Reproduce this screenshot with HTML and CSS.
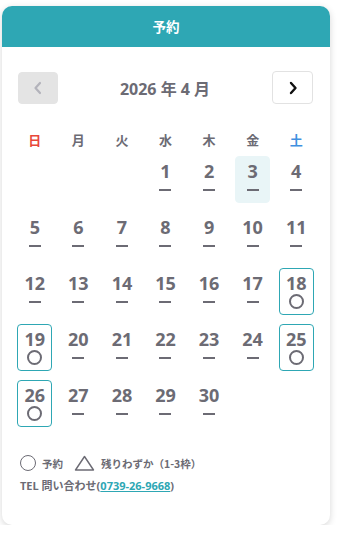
FILE: index.html
```html
<!DOCTYPE html>
<html lang="ja">
<head>
  <meta charset="UTF-8">
  <meta name="viewport" content="width=device-width, initial-scale=1.0">
  <title>予約</title>
  <link rel="stylesheet" href="styles.css">
</head>
<body>
  <div class="page">
    <div class="card">
      <div class="card-header">予約</div>

      <!-- 月の切り替え -->
      <div class="month-nav">
        <button class="nav-btn prev" disabled>
          <svg width="12" height="14" viewBox="0 0 12 14"><path d="M8 2 L3.5 7 L8 12" fill="none" stroke="#b3b3bb" stroke-width="2.2" stroke-linecap="round" stroke-linejoin="round"/></svg>
        </button>
        <div class="month-title">2026 年 4 月</div>
        <button class="nav-btn next">
          <svg width="12" height="14" viewBox="0 0 12 14"><path d="M4 2 L8.5 7 L4 12" fill="none" stroke="#111" stroke-width="2.4" stroke-linecap="round" stroke-linejoin="round"/></svg>
        </button>
      </div>

      <div class="weekdays">
        <div class="sun">日</div>
        <div>月</div>
        <div>火</div>
        <div>水</div>
        <div>木</div>
        <div>金</div>
        <div class="sat">土</div>
      </div>

      <div class="days" id="days"></div>

      <div class="legend">
        <span class="circle"></span><span class="legend-text">予約</span>
        <svg class="triangle" width="21" height="16" viewBox="0 0 21 16"><path d="M10.5 1.5 L19.5 15 L1.5 15 Z" fill="none" stroke="#6c6b74" stroke-width="1.4" stroke-linejoin="round"/></svg>
        <span class="legend-text">残りわずか（1-3枠）</span>
      </div>
      <div class="tel">TEL 問い合わせ(<a href="#">0739-26-9668</a>)</div>
    </div>
  </div>

  <script>
    var open = [18, 19, 25, 26];
    var today = 3;
    var days = document.getElementById("days");

    // 2026年4月1日は水曜日
    for (var i = 0; i < 3; i++) {
      var blank = document.createElement("div");
      days.appendChild(blank);
    }

    for (var d = 1; d <= 30; d++) {
      var cell = document.createElement("div");
      cell.className = "day";
      if (d == today) cell.className += " today";
      var isOpen = open.indexOf(d) >= 0;
      if (isOpen) cell.className += " open";
      cell.innerHTML = '<div class="num">' + d + '</div>' +
        '<div class="mark">' + (isOpen ? '<span class="circle small"></span>' : '<span class="dash"></span>') + '</div>';
      var wrap = document.createElement("div");
      wrap.className = "day-wrap";
      wrap.appendChild(cell);
      days.appendChild(wrap);
    }
  </script>
</body>
</html>
```

FILE: styles.css
```css
body {
  margin: 0;
  background-color: #fff;
  font-family: "Open Sans", "Noto Sans CJK JP", sans-serif;
  color: #6c6b74;
}
.page {
  padding: 6px 8px 0 2px;
}
.card {
  width: 328px;
  height: 519px;
  background-color: #fff;
  border-radius: 10px;
  box-shadow: 0 2px 7px rgba(0, 0, 0, 0.16);
  overflow: hidden;
  position: relative;
}
.card-header {
  height: 41px;
  line-height: 41px;
  background-color: #2ea7b4;
  color: #fff;
  text-align: center;
  font-family: "Noto Sans CJK JP", sans-serif;
  font-size: 13.5px;
  font-weight: bold;
}
.month-nav {
  display: flex;
  align-items: center;
  justify-content: space-between;
  padding: 24px 17px 0 16px;
}
.nav-btn {
  width: 41px;
  height: 33px;
  border-radius: 4px;
  border: 1px solid #e2e2e2;
  background-color: #fff;
  display: flex;
  align-items: center;
  justify-content: center;
  padding: 0;
  cursor: pointer;
}
.nav-btn.prev {
  width: 40px;
  height: 32px;
  margin-top: 1px;
  background-color: #e4e4e4;
  border-color: #e4e4e4;
  cursor: default;
}
.month-title {
  font-size: 16px;
  font-weight: bold;
  color: #6c6b74;
}
.weekdays {
  display: grid;
  grid-template-columns: repeat(7, 1fr);
  padding: 0 12px 0 11px;
  margin-top: 26px;
  font-family: "Noto Sans CJK JP", sans-serif;
  font-size: 13px;
  font-weight: bold;
  line-height: 20px;
  text-align: center;
}
.weekdays .sun {
  color: #e8473a;
}
.weekdays .sat {
  color: #3f90e0;
}
.days {
  display: grid;
  grid-template-columns: repeat(7, 1fr);
  grid-auto-rows: 47px;
  row-gap: 9px;
  padding: 0 12px 0 11px;
  margin-top: 6px;
}
.day-wrap {
  display: flex;
  justify-content: center;
}
.day {
  width: 35px;
  height: 47px;
  box-sizing: border-box;
  border-radius: 4px;
  border: 1px solid transparent;
  text-align: center;
}
.day.today {
  background-color: #e9f5f7;
  border-color: #e9f5f7;
}
.day.open {
  border-color: #2ea7b4;
}
.num {
  font-size: 18px;
  font-weight: bold;
  line-height: 20px;
  padding-top: 4px;
}
.mark {
  height: 17px;
  display: flex;
  align-items: center;
  justify-content: center;
}
.dash {
  width: 12px;
  height: 2px;
  background-color: #6c6b74;
}
.circle {
  display: inline-block;
  width: 15px;
  height: 15px;
  box-sizing: border-box;
  border: 1.6px solid #6c6b74;
  border-radius: 50%;
}
.circle.small {
  width: 15px;
  height: 15px;
  border-width: 2px;
}
.legend {
  display: flex;
  align-items: center;
  padding-left: 18px;
  margin-top: 28px;
}
.legend .circle {
  width: 16px;
  height: 16px;
}
.legend-text {
  font-family: "Noto Sans CJK JP", sans-serif;
  font-size: 10.5px;
  font-weight: bold;
  margin-left: 6px;
}
.triangle {
  margin-left: 11px;
}
.tel {
  padding-left: 18px;
  margin-top: 6px;
  font-family: "Open Sans", "Noto Sans CJK JP", sans-serif;
  font-size: 11px;
  font-weight: bold;
}
.tel a {
  color: #2ea7b4;
  text-decoration: underline;
}
```
